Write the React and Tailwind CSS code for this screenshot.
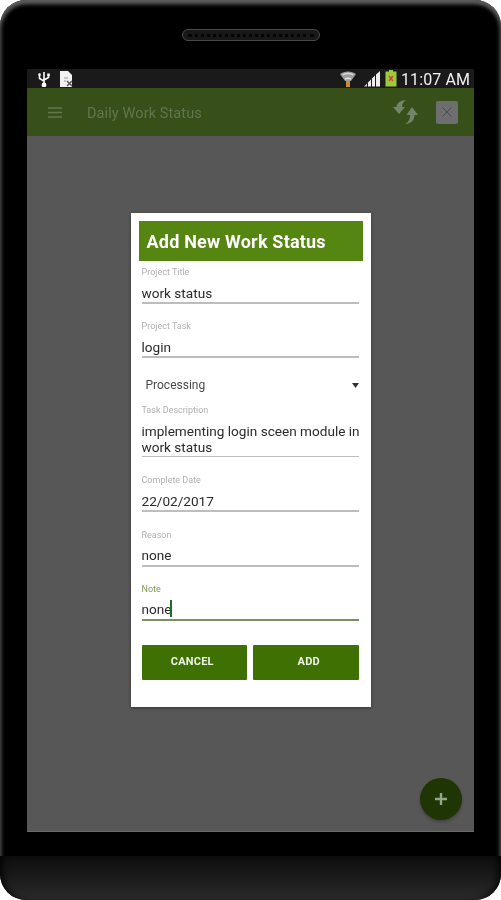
const font = { fontFamily: "Roboto, 'Liberation Sans', sans-serif" };

function Field({ label, children, labelClass = "text-[#b0b0b0]", lineClass = "bg-[#bdbdbd]", className = "", valueClass = "mt-[7px]", lineGap = "mt-[1px]" }) {
  return (
    <div className={"flex flex-col " + className}>
      <div className={"text-[9px] leading-[12px] h-[12px] " + labelClass}>{label}</div>
      <div className={"text-[13.6px] leading-[16px] text-[#2b2b2b] " + valueClass}>{children}</div>
      <div className={"h-[2px] w-full " + lineGap + " " + lineClass} />
    </div>
  );
}

function StatusBar() {
  return (
    <div className="h-[19px] bg-[#1a1a1a] flex items-center pl-[10px] pr-[4px] text-white">
      <svg width="14" height="16" viewBox="0 0 14 16" fill="none" stroke="#fff" strokeWidth="1.6">
        <path d="M7 1v14M2.5 4v3.5L7 10M11.5 4v2.5L7 9" />
        <circle cx="7" cy="14" r="1.6" fill="#fff" />
        <circle cx="2.5" cy="3.5" r="1.3" fill="#fff" stroke="none" />
        <rect x="10.2" y="2.5" width="2.6" height="2.6" fill="#fff" stroke="none" />
      </svg>
      <svg className="ml-[8px] mt-[1px]" width="16" height="18" viewBox="0 0 16 18">
        <path d="M1 1h8l4 4v12H1z" fill="#f2f2f2" />
        <path d="M8 11l5 5M13 11l-5 5" stroke="#555" strokeWidth="1.5" />
        <path d="M5 8h4M5 11h2" stroke="#999" strokeWidth="1" />
      </svg>
      <div className="flex-1" />
      <svg width="18" height="18" viewBox="0 0 18 18" fill="none">
        <path d="M1 4c4-3.500 12-3.500 16 0L12 11H6z" fill="#9c9c9c" />
        <path d="M3.500 5c3-2 8-2 11 0" stroke="#dcdcdc" strokeWidth="1.400" />
        <path d="M6 9c2-1 4-1 6 0" stroke="#e4e4e4" strokeWidth="1.400" />
        <rect x="7" y="11" width="4" height="6" fill="#c98a3a" />
      </svg>
      <svg className="ml-[7px]" width="16" height="16" viewBox="0 0 16 16" fill="#eeeeee">
        <path d="M0 15.500L3 12.500V15.500z" fill="#cccccc" />
        <path d="M4 11.500L7 8.500V15.500H4z" />
        <path d="M8 7.500L11 4.500V15.500H8z" />
        <path d="M12 3.500L16 0V15.500H12z" />
      </svg>
      <svg className="ml-[5px]" width="12" height="17" viewBox="0 0 12 17">
        <rect x="4" y="0" width="4" height="2" fill="#9ccc3c" />
        <rect x="0.500" y="1.500" width="11" height="15" fill="#9ccc3c" />
        <path d="M4 6l4 5M8 6l-4 5" stroke="#d8433a" strokeWidth="1.600" />
      </svg>
      <span className="ml-[4px] mt-[1px] text-[16px] leading-[19px] tracking-[0.1px] text-[#f2f2f2]">11:07 AM</span>
    </div>
  );
}

function AppBar() {
  return (
    <div className="h-[48px] bg-[#37501a] flex items-center pl-[21px] pr-[16px]">
      <svg width="14" height="11" viewBox="0 0 14 11" stroke="#63764c" strokeWidth="1.300">
        <path d="M0 1h14M0 5.500h14M0 10h14" />
      </svg>
      <span className="ml-[25px] mt-[3px] text-[14.500px] text-[#63754c] tracking-[0.1px]">Daily Work Status</span>
      <div className="flex-1" />
      <svg width="25" height="26" viewBox="0 0 25 26" fill="#74846a">
        <path d="M13 1C10 3 9 5 9 8H12L6 15L0 8H3.500C3.500 4 8 1 13 1z" />
        <path d="M12 25C16 23 17 20 17 16H13.500L19 8L25 16H21.500C21.500 21 18 25 12 25z" />
      </svg>
      <div className="ml-[18px] w-[22px] h-[23px] rounded-[2px] bg-[#6e6e6e] flex items-center justify-center">
        <svg width="12" height="12" viewBox="0 0 12 12" stroke="#4e4e4e" strokeWidth="1">
          <path d="M1.500 1.500l9 9M10.500 1.500l-9 9" />
        </svg>
      </div>
    </div>
  );
}

function Dialog() {
  return (
    <div className="w-[240px] h-[494px] bg-white p-[8px] shadow-[0_1px_3px_rgba(0,0,0,0.4)]">
      <div className="h-[40px] bg-[#548611] flex items-center pl-[8px] text-white text-[18px] font-bold tracking-[0.2px]">
        Add New Work Status
      </div>
      <div className="pl-[3px] pr-[4px] pt-[5px] flex flex-col">
        <Field label="Project Title">work status</Field>
        <Field label="Project Task" className="mt-[16px]">login</Field>
        <div className="mt-[17px] h-[20px] flex items-center justify-between pl-[4px] text-[12px] text-[#4a4a4a]">
          <span>Processing</span>
          <svg width="7" height="5" viewBox="0 0 7 5"><path d="M0 0h7L3.500 5z" fill="#333" /></svg>
        </div>
        <div className="mt-[9px] flex flex-col">
          <div className="text-[9px] leading-[12px] h-[12px] text-[#b0b0b0]">Task Description</div>
          <div className="mt-[7px] text-[13.600px] leading-[16px] text-[#2b2b2b] whitespace-nowrap">
            implementing login sceen module in<br />work status
          </div>
          <div className="mt-[1px] h-[1px] bg-[#bdbdbd]" />
        </div>
        <Field label="Complete Date" className="mt-[17px]">22/02/2017</Field>
        <Field label="Reason" className="mt-[17px]" valueClass="mt-[6px]" lineGap="mt-[2px]">none</Field>
        <Field label="Note" className="mt-[16px]" labelClass="text-[#7f9a55]" lineClass="bg-[#7b8f63]" valueClass="mt-[5px]" lineGap="mt-[2px]">
          <span className="inline-flex items-center">none<span className="inline-block w-[2px] h-[17px] bg-[#1f6b2a] -ml-[1px]" /></span>
        </Field>
        <div className="mt-[24px] grid grid-cols-2 gap-[6px] text-[#eef3e6] text-[11px] font-bold tracking-[0.2px]">
          <div className="h-[35px] bg-[#3f7004] rounded-[1px] flex items-center justify-center pr-[4px]">CANCEL</div>
          <div className="h-[35px] bg-[#3f7004] rounded-[1px] flex items-center justify-center pl-[6px]">ADD</div>
        </div>
      </div>
    </div>
  );
}

export default function App() {
  return (
    <div className="w-[501px] h-[900px] bg-white overflow-hidden" style={font}>
      <div className="relative w-[501px] h-[900px] rounded-[26px] bg-black overflow-hidden blur-[0.5px] flex flex-col shadow-[inset_0_5px_4px_-1px_#5c5c5c,inset_3px_3px_4px_-2px_#4a4a4a,inset_-3px_3px_4px_-2px_#4a4a4a]">
        <div className="h-[69px] flex justify-center items-start pt-[29px]">
          <div className="w-[138px] h-[12px] rounded-full bg-[#181818] border border-[#4a4a4a] flex items-center px-[5px]">
            <div className="w-full border-t-[3px] border-dotted border-[#050505]" />
          </div>
        </div>
        <div className="mx-[27px] h-[763px] flex flex-col">
          <StatusBar />
          <AppBar />
          <div className="relative flex-1 bg-[#575757] flex justify-center pt-[77px] border-b border-[#6a6a6a]">
            <Dialog />
            <div className="absolute right-[12px] bottom-[11px] w-[42px] h-[42px] rounded-full bg-[#1f3504] flex items-center justify-center shadow-[0_2px_3px_rgba(0,0,0,0.25)]">
              <svg width="14" height="14" viewBox="0 0 14 14" stroke="#93a685" strokeWidth="2.400">
                <path d="M7 1v12M1 7h12" />
              </svg>
            </div>
          </div>
        </div>
        <div className="h-[24px]" />
        <div className="flex-1 rounded-b-[26px] bg-gradient-to-b from-[#0e0e0e] to-[#2a2a2a] shadow-[inset_8px_0_8px_-6px_#000,inset_-8px_0_8px_-6px_#000]" />
      </div>
    </div>
  );
}
